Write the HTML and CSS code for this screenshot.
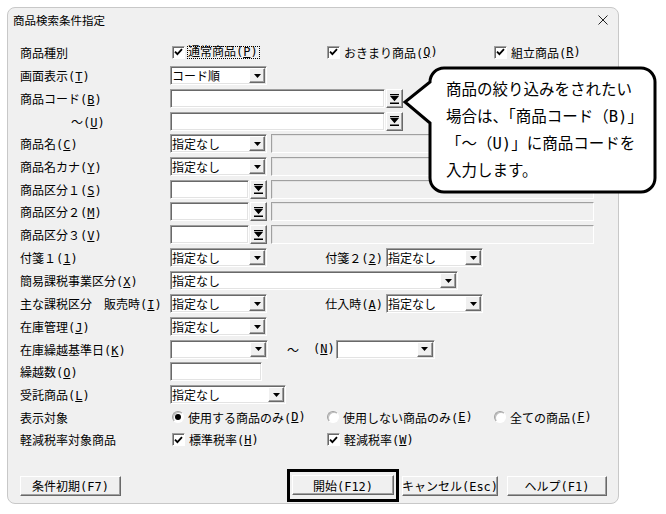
FILE: index.html
```html
<!DOCTYPE html>
<html lang="ja">
<head>
  <meta charset="UTF-8" />
  <title>商品検索条件指定</title>
  <link rel="stylesheet" href="styles.css">
</head>
<body>
  <div class="dialog">
    <div class="titlebar">
      <span class="title">商品検索条件指定</span>
      <svg class="close" width="10" height="10" viewBox="0 0 10 10"><path d="M0.5 0.5L9.5 9.5M9.5 0.5L0.5 9.5" /></svg>
    </div>

    <div class="form">
      <div class="row tall">
        <span class="label">商品種別</span>
        <div class="opt c1"><span class="check"><svg width="9" height="8" viewBox="0 0 9 8"><path d="M1 3.6L3.4 6.2L8 1.2" /></svg></span><span class="focus">通常商品(<u>P</u>)</span></div>
        <div class="opt c2"><span class="check"><svg width="9" height="8" viewBox="0 0 9 8"><path d="M1 3.6L3.4 6.2L8 1.2" /></svg></span>おきまり商品(<u>Q</u>)</div>
        <div class="opt"><span class="check"><svg width="9" height="8" viewBox="0 0 9 8"><path d="M1 3.6L3.4 6.2L8 1.2" /></svg></span>組立商品(<u>R</u>)</div>
      </div>

      <div class="row">
        <span class="label">画面表示(<u>T</u>)</span>
        <div class="box w97">コード順<span class="drop"><svg width="7" height="4" viewBox="0 0 7 4"><path d="M0 0H7L3.5 4Z" /></svg></span></div>
      </div>

      <div class="row">
        <span class="label">商品コード(<u>B</u>)</span>
        <div class="box w215"></div>
        <span class="pick"><svg width="9" height="10" viewBox="0 0 9 10"><path d="M0 0H9V1.2H0Z M0 2H9L4.5 7.2Z M0 8.6H9V10H0Z" /></svg></span>
      </div>

      <div class="row short">
        <span class="label sub">～(<u>U</u>)</span>
        <div class="box w215"></div>
        <span class="pick"><svg width="9" height="10" viewBox="0 0 9 10"><path d="M0 0H9V1.2H0Z M0 2H9L4.5 7.2Z M0 8.6H9V10H0Z" /></svg></span>
      </div>

      <div class="row">
        <span class="label">商品名(<u>C</u>)</span>
        <div class="box w97">指定なし<span class="drop"><svg width="7" height="4" viewBox="0 0 7 4"><path d="M0 0H7L3.5 4Z" /></svg></span></div>
        <div class="box gray w323"></div>
      </div>

      <div class="row">
        <span class="label">商品名カナ(<u>Y</u>)</span>
        <div class="box w97">指定なし<span class="drop"><svg width="7" height="4" viewBox="0 0 7 4"><path d="M0 0H7L3.5 4Z" /></svg></span></div>
        <div class="box gray w323"></div>
      </div>

      <div class="row short">
        <span class="label">商品区分１(<u>S</u>)</span>
        <div class="box w79"></div>
        <span class="pick"><svg width="9" height="10" viewBox="0 0 9 10"><path d="M0 0H9V1.2H0Z M0 2H9L4.5 7.2Z M0 8.6H9V10H0Z" /></svg></span>
        <div class="box gray w323"></div>
      </div>

      <div class="row">
        <span class="label">商品区分２(<u>M</u>)</span>
        <div class="box w79"></div>
        <span class="pick"><svg width="9" height="10" viewBox="0 0 9 10"><path d="M0 0H9V1.2H0Z M0 2H9L4.5 7.2Z M0 8.6H9V10H0Z" /></svg></span>
        <div class="box gray w323"></div>
      </div>

      <div class="row">
        <span class="label">商品区分３(<u>V</u>)</span>
        <div class="box w79"></div>
        <span class="pick"><svg width="9" height="10" viewBox="0 0 9 10"><path d="M0 0H9V1.2H0Z M0 2H9L4.5 7.2Z M0 8.6H9V10H0Z" /></svg></span>
        <div class="box gray w323"></div>
      </div>

      <div class="row">
        <span class="label">付箋１(<u>1</u>)</span>
        <div class="box w97">指定なし<span class="drop"><svg width="7" height="4" viewBox="0 0 7 4"><path d="M0 0H7L3.5 4Z" /></svg></span></div>
        <span class="sublabel">付箋２(<u>2</u>)</span>
        <div class="box w97">指定なし<span class="drop"><svg width="7" height="4" viewBox="0 0 7 4"><path d="M0 0H7L3.5 4Z" /></svg></span></div>
      </div>

      <div class="row">
        <span class="label">簡易課税事業区分(<u>X</u>)</span>
        <div class="box w288">指定なし<span class="drop"><svg width="7" height="4" viewBox="0 0 7 4"><path d="M0 0H7L3.5 4Z" /></svg></span></div>
      </div>

      <div class="row">
        <span class="label">主な課税区分　販売時(<u>I</u>)</span>
        <div class="box w97">指定なし<span class="drop"><svg width="7" height="4" viewBox="0 0 7 4"><path d="M0 0H7L3.5 4Z" /></svg></span></div>
        <span class="sublabel">仕入時(<u>A</u>)</span>
        <div class="box w97">指定なし<span class="drop"><svg width="7" height="4" viewBox="0 0 7 4"><path d="M0 0H7L3.5 4Z" /></svg></span></div>
      </div>

      <div class="row">
        <span class="label">在庫管理(<u>J</u>)</span>
        <div class="box w97">指定なし<span class="drop"><svg width="7" height="4" viewBox="0 0 7 4"><path d="M0 0H7L3.5 4Z" /></svg></span></div>
      </div>

      <div class="row short">
        <span class="label">在庫繰越基準日(<u>K</u>)</span>
        <div class="box w98"><span class="drop"><svg width="7" height="4" viewBox="0 0 7 4"><path d="M0 0H7L3.5 4Z" /></svg></span></div>
        <span class="tilde">～</span>
        <span class="nlabel">(<u>N</u>)</span>
        <div class="box w99"><span class="drop"><svg width="7" height="4" viewBox="0 0 7 4"><path d="M0 0H7L3.5 4Z" /></svg></span></div>
      </div>

      <div class="row">
        <span class="label">繰越数(<u>O</u>)</span>
        <div class="box w92"></div>
      </div>

      <div class="row">
        <span class="label">受託商品(<u>L</u>)</span>
        <div class="box w116">指定なし<span class="drop"><svg width="7" height="4" viewBox="0 0 7 4"><path d="M0 0H7L3.5 4Z" /></svg></span></div>
      </div>

      <div class="row short">
        <span class="label">表示対象</span>
        <div class="opt c1"><span class="radio on"></span>使用する商品のみ(<u>D</u>)</div>
        <div class="opt c2"><span class="radio"></span>使用しない商品のみ(<u>E</u>)</div>
        <div class="opt"><span class="radio"></span>全ての商品(<u>F</u>)</div>
      </div>

      <div class="row">
        <span class="label">軽減税率対象商品</span>
        <div class="opt c1"><span class="check"><svg width="9" height="8" viewBox="0 0 9 8"><path d="M1 3.6L3.4 6.2L8 1.2" /></svg></span>標準税率(<u>H</u>)</div>
        <div class="opt c2"><span class="check"><svg width="9" height="8" viewBox="0 0 9 8"><path d="M1 3.6L3.4 6.2L8 1.2" /></svg></span>軽減税率(<u>W</u>)</div>
      </div>
    </div>

    <div class="buttons">
      <button class="btn btn-reset">条件初期(F7)</button>
      <div class="focus-ring"><button class="btn">開始(F12)</button></div>
      <button class="btn btn-cancel">キャンセル(Esc)</button>
      <button class="btn btn-help">ヘルプ(F1)</button>
    </div>

    <!-- help balloon pointing at the code fields -->
    <div class="callout">
      <svg class="bubble" width="256" height="130" viewBox="0 0 256 130">
        <path d="M42 2H239A14 14 0 0 1 253 16V112A14 14 0 0 1 239 126H42A14 14 0 0 1 28 112V57L3 36L28 16A14 14 0 0 1 42 2Z" />
      </svg>
      <p class="bubble-text">商品の絞り込みをされたい<br>場合は、「商品コード（B)」<br>「～（U)」に商品コードを<br>入力します。</p>
    </div>
  </div>
</body>
</html>
```

FILE: styles.css
```css
/* Reset */
* {
  box-sizing: border-box;
  margin: 0;
  padding: 0;
}
body {
  font-family: "DejaVu Sans Mono", "Noto Sans CJK JP", monospace;
  font-size: 12px;
  color: #000;
  background: #fff;
}
u {
  text-underline-offset: 1px;
}

/* Dialog frame */
.dialog {
  position: relative;
  width: 612px;
  height: 497px;
  margin: 7px;
  background: #f0f0f0;
  border: 1px solid #c8c8c8;
  border-radius: 8px;
}
.titlebar {
  display: flex;
  align-items: center;
  justify-content: space-between;
  height: 26px;
  padding: 0 10px 2px 5px;
}
.title {
  font-family: "Noto Sans CJK JP", sans-serif;
  font-size: 11.5px;
}
.close {
  fill: none;
  stroke: #222;
  stroke-width: 1;
}

/* Form rows */
.form {
  padding: 6px 0 0 12px;
}
.row {
  display: flex;
  align-items: center;
  height: 23px;
  white-space: nowrap;
}
.row.tall {
  height: 24px;
}
.row.short {
  height: 22px;
}
.label {
  width: 150px;
  flex: none;
}
.label.sub {
  padding-left: 51px;
}
.sublabel {
  width: 119px;
  flex: none;
  padding-right: 3px;
  text-align: right;
}
.tilde {
  margin-left: 19px;
  font-family: "Noto Sans CJK JP", sans-serif;
}
.nlabel {
  margin: 0 1px 0 14px;
}

/* Sunken fields */
.box {
  display: flex;
  align-items: center;
  flex: none;
  height: 19px;
  padding-left: 1px;
  background: #fff;
  border: 1px solid;
  border-color: #a0a0a0 #fff #fff #a0a0a0;
  box-shadow: inset 1px 1px 0 #696969, inset -1px -1px 0 #e3e3e3;
}
.box.gray {
  margin-left: 4px;
  background: #f0f0f0;
  box-shadow: inset 1px 1px 0 #e3e3e3;
}
.w79 { width: 79px; }
.w92 { width: 92px; }
.w97 { width: 97px; }
.w98 { width: 98px; }
.w99 { width: 99px; }
.w116 { width: 116px; }
.w215 { width: 215px; }
.w288 { width: 288px; }
.w323 { width: 323px; }

/* Raised little buttons */
.drop,
.pick {
  display: flex;
  align-items: center;
  justify-content: center;
  flex: none;
  background: #f0f0f0;
  border: 1px solid;
  border-color: #fff #696969 #696969 #fff;
  box-shadow: inset -1px -1px 0 #a0a0a0;
}
.drop {
  width: 16px;
  height: 15px;
  margin: 0 1px 0 auto;
}
.pick {
  width: 17px;
  height: 19px;
  margin-left: 1px;
}
.drop svg,
.pick svg {
  fill: #000;
}

/* Check boxes and radios */
.opt {
  display: flex;
  align-items: center;
  flex: none;
}
.c1 { width: 155px; }
.c2 { width: 167px; }
.check {
  display: flex;
  align-items: center;
  justify-content: center;
  flex: none;
  width: 13px;
  height: 13px;
  margin: 0 4px 0 2px;
  background: #fff;
  border: 1px solid;
  border-color: #a0a0a0 #fff #fff #a0a0a0;
  box-shadow: inset 1px 1px 0 #696969;
}
.check svg {
  fill: none;
  stroke: #000;
  stroke-width: 1.8;
}
.focus {
  margin-left: -2px;
  padding: 0 1px 0 0;
  line-height: 11px;
  border: 1px dotted #000;
}
.radio {
  position: relative;
  flex: none;
  width: 12px;
  height: 12px;
  margin: 0 4px 0 2px;
  background: #fff;
  border: 1px solid;
  border-color: #a0a0a0 #fff #fff #a0a0a0;
  border-radius: 50%;
  box-shadow: inset 1px 1px 0 #c0c0c0;
}
.radio.on::after {
  content: "";
  position: absolute;
  left: 2px;
  top: 2px;
  width: 6px;
  height: 6px;
  border-radius: 50%;
  background: #000;
}

/* Bottom buttons */
.buttons {
  display: flex;
  align-items: center;
  margin-top: 18px;
  padding-left: 12px;
}
.btn {
  display: flex;
  align-items: center;
  justify-content: center;
  flex: none;
  height: 20px;
  font: inherit;
  color: #000;
  white-space: nowrap;
  background: #f0f0f0;
  border: 1px solid;
  border-color: #fff #696969 #696969 #fff;
  box-shadow: inset -1px -1px 0 #a0a0a0;
}
.btn-reset { width: 101px; }
.focus-ring {
  flex: none;
  width: 112px;
  height: 33px;
  margin-left: 166px;
  padding: 3px 2px 4px 2px;
  border: 3px solid #000;
}
.focus-ring .btn { width: 102px; }
.btn-cancel {
  width: 96px;
  margin-left: 3px;
}
.btn-help {
  width: 100px;
  margin-left: 9px;
}

/* Balloon */
.callout {
  position: absolute;
  left: 394px;
  top: 58px;
  width: 256px;
  height: 130px;
}
.bubble path {
  fill: #fff;
  stroke: #000;
  stroke-width: 3;
  stroke-linejoin: miter;
}
.bubble-text {
  position: absolute;
  left: 44px;
  top: 11px;
  font-size: 15.5px;
  line-height: 27px;
  white-space: nowrap;
}
```
